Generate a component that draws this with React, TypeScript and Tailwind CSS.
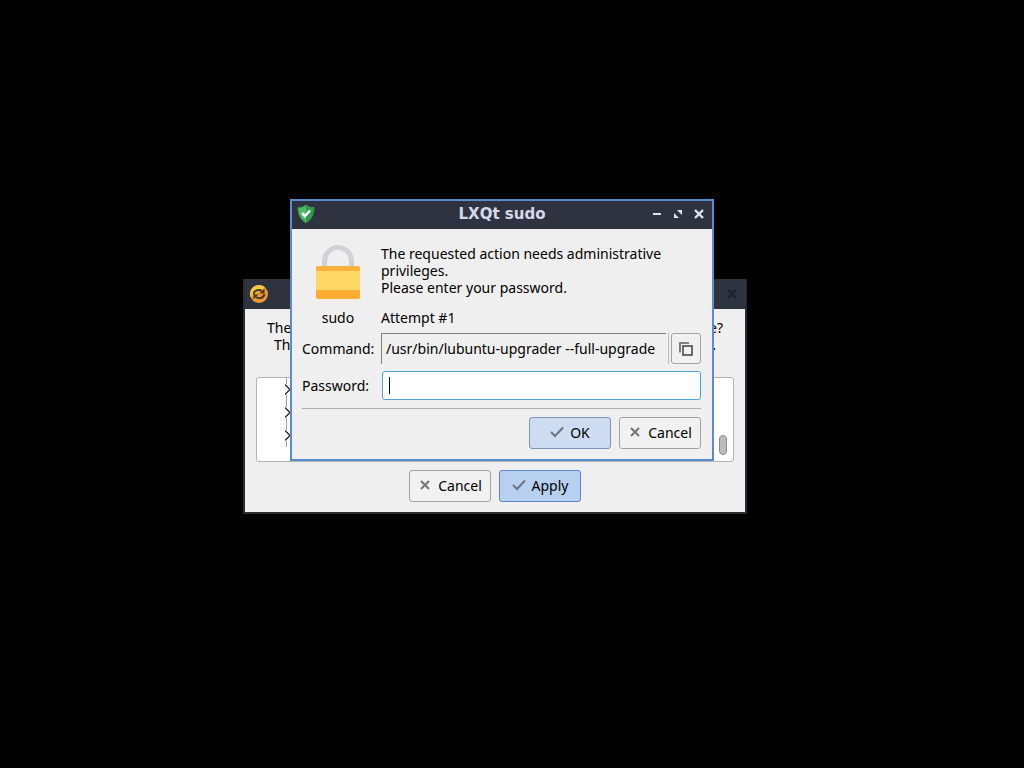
import { useState } from 'react'
import type { ReactNode } from 'react'

const CHEVRONS = ['linux', 'firmware', 'security']

function ShieldIcon() {
  return (
    <svg width="20" height="20" viewBox="0 0 20 20" aria-hidden="true">
      <path d="M10 1C7.500 3 5 3.600 2 3.600C2 10.500 4.500 15.500 10 19Z" fill="#4cbb66" />
      <path d="M10 1C12.500 3 15 3.600 18 3.600C18 10.500 15.500 15.500 10 19Z" fill="#2f9a4e" />
      <path d="M10 1C7.500 3 5 3.600 2 3.600C2 10.500 4.500 15.500 10 19C15.500 15.500 18 10.500 18 3.600C15 3.600 12.500 3 10 1Z" fill="none" stroke="#3a8f50" />
      <path d="M6 9L9 12L14 6.500" fill="none" stroke="#fff" strokeWidth="2.600" />
    </svg>
  )
}

function UpdateIcon() {
  return (
    <svg width="20" height="20" viewBox="0 0 20 20" aria-hidden="true">
      <circle cx="10" cy="10" r="9" fill="#ee9a35" />
      <path d="M1.500 13A9 9 0 0 1 16 3.300Z" fill="#f4c844" />
      <path d="M4.500 10.500C5 6.500 9.500 4.800 13 7" fill="none" stroke="#4a3a26" strokeWidth="2" />
      <path d="M15.500 4.500V9.500H10.500Z" fill="#4a3a26" />
      <path d="M15.500 10C15 13.800 10.500 15.300 7 13.200" fill="none" stroke="#4a3a26" strokeWidth="2" />
      <path d="M4.500 15.500V10.500H9.500Z" fill="#4a3a26" />
    </svg>
  )
}

function LockIcon() {
  return (
    <svg width="44" height="56" viewBox="0 0 44 56" aria-hidden="true">
      <path d="M8.500 23V16A13.500 13.500 0 0 1 35.500 16V23" fill="none" stroke="#d2d2d4" strokeWidth="5" />
      <rect y="21" width="44" height="33" rx="2" fill="#ffd764" />
      <path d="M0 26V23A2 2 0 0 1 2 21H42A2 2 0 0 1 44 23V26Z" fill="#ffb13b" />
      <path d="M0 45H44V52A2 2 0 0 1 42 54H2A2 2 0 0 1 0 52Z" fill="#ffac33" />
    </svg>
  )
}

function CheckIcon() {
  return (
    <svg width="14" height="14" viewBox="0 0 14 14" aria-hidden="true">
      <path d="M1 7L5 11L13 2.500" fill="none" stroke="#6b7480" strokeWidth="2" />
    </svg>
  )
}

function CrossIcon() {
  return (
    <svg width="14" height="14" viewBox="0 0 14 14" aria-hidden="true">
      <path d="M3 3L11 11M11 3L3 11" fill="none" stroke="#747474" strokeWidth="2" />
    </svg>
  )
}

function CopyIcon() {
  return (
    <svg width="16" height="16" viewBox="0 0 16 16" aria-hidden="true">
      <path d="M2 11.500V2H11" fill="none" stroke="#5c5c5c" strokeWidth="1.600" />
      <rect x="5" y="5" width="9" height="9" fill="none" stroke="#5c5c5c" strokeWidth="1.800" />
    </svg>
  )
}

interface ActionButtonProps {
  icon: ReactNode
  label: string
  className: string
}

function ActionButton({ icon, label, className }: ActionButtonProps) {
  return (
    <button type="button" className={`flex h-8 w-[82px] items-center justify-center gap-1.5 rounded-[3px] border pb-0.5 ${className}`}>
      {icon}
      {label}
    </button>
  )
}

function UpgraderWindow() {
  return (
    <section className="absolute left-[243px] top-[279px] w-[504px] border-x-2 border-b-2 border-[#2b2d33] bg-[#efefef]">
      <header className="flex h-[30px] items-center justify-between bg-[#2f323f] pl-1 pr-2">
        <UpdateIcon />
        <button type="button" aria-label="Close">
          <svg width="10" height="10" viewBox="0 0 10 10" aria-hidden="true">
            <path d="M1 1L9 9M9 1L1 9" stroke="#1f222c" strokeWidth="2" />
          </svg>
        </button>
      </header>
      <div className="px-[11px] pb-2.5 pt-2.5">
        <div className="h-[58px]">
          <p className="flex justify-between px-[11px]"><span>The</span><span>e?</span></p>
          <p className="flex justify-between px-[18px]"><span>Th</span><span>.</span></p>
        </div>
        <div className="flex h-[85px] justify-between rounded-[3px] border border-[#b4b4b4] bg-white">
          <ul className="ml-7">
            {CHEVRONS.map((c) => (
              <li key={c} className="flex h-[23px] flex-col items-start">
                <span className="ml-px h-[6px] border-l border-gray-400" />
                <svg width="6" height="11" viewBox="0 0 6 11" aria-hidden="true">
                  <path d="M0 0.500L5 5.500L0 10.500" fill="none" stroke="#26262c" strokeWidth="1.300" />
                </svg>
                <span className="ml-px h-[6px] border-l border-gray-400" />
              </li>
            ))}
          </ul>
          <div className="mb-1.5 mr-1.5 h-5 w-2 self-end rounded-full border border-[#8d8d8d] bg-[#bcbcbc]" />
        </div>
        <div className="mt-2 flex justify-center gap-2">
          <ActionButton icon={<CrossIcon />} label="Cancel" className="border-[#a3a3a3] bg-[#f1f1f1]" />
          <ActionButton icon={<CheckIcon />} label="Apply" className="border-[#5b87c7] bg-[#b7d0f0]" />
        </div>
      </div>
    </section>
  )
}

function SudoDialog() {
  const [password, setPassword] = useState('')

  return (
    <section className="absolute left-[290px] top-[199px] w-[424px] border-2 border-[#5b8ccb] bg-[#efefef]">
      <header className="grid h-7 grid-cols-[64px_1fr_64px] items-center bg-[#2f3340] px-1 pb-0.5">
        <ShieldIcon />
        <h1 className="text-center font-['DejaVu_Sans'] text-[15px] font-bold text-[#d3d9e9]">LXQt sudo</h1>
        <div className="flex items-center justify-end gap-[11px] pr-1">
          <button type="button" aria-label="Minimize">
            <svg width="10" height="10" viewBox="0 0 10 10" aria-hidden="true">
              <path d="M1 5H9" stroke="#dfe4ee" strokeWidth="2" />
            </svg>
          </button>
          <button type="button" aria-label="Maximize">
            <svg width="10" height="10" viewBox="0 0 10 10" aria-hidden="true">
              <path d="M4 1H9V6ZM1 4V9H6Z" fill="#dfe4ee" />
            </svg>
          </button>
          <button type="button" aria-label="Close">
            <svg width="10" height="10" viewBox="0 0 10 10" aria-hidden="true">
              <path d="M1 1L9 9M9 1L1 9" stroke="#dfe4ee" strokeWidth="2.400" />
            </svg>
          </button>
        </div>
      </header>

      <form className="pb-2.5 pl-2.5 pr-[11px] pt-4" onSubmit={(e) => e.preventDefault()}>
        <div className="grid grid-cols-[72px_1fr] gap-x-[7px]">
          <div className="flex justify-center"><LockIcon /></div>
          <p>
            The requested action needs administrative<br />
            privileges.<br />
            Please enter your password.
          </p>
          <p className="mt-2 text-center">sudo</p>
          <p className="mt-2">Attempt #1</p>
        </div>

        <div className="mt-[7px] grid grid-cols-[72px_1fr] items-center gap-x-[7px] gap-y-[7px]">
          <label htmlFor="command">Command:</label>
          <div className="flex gap-0.5">
            <div className="flex-1 border-r border-[#bbb] pr-0.5">
              <input id="command" readOnly value="/usr/bin/lubuntu-upgrader --full-upgrade"
                className="block h-[31px] w-full border-l border-t border-[#808080] bg-transparent pb-0.5 pl-1 outline-none" />
            </div>
            <button type="button" aria-label="Copy command"
              className="flex h-[31px] w-[30px] items-center justify-center rounded-[3px] border border-[#a3a3a3] bg-[#f1f1f1]">
              <CopyIcon />
            </button>
          </div>
          <label htmlFor="password">Password:</label>
          <div className="relative pl-px">
            <input id="password" type="password" value={password} onChange={(e) => setPassword(e.target.value)}
              className="block h-[29px] w-full rounded-[3px] border border-[#4fa3cc] bg-white px-1.5 caret-transparent outline-none" />
            {password === '' && <span className="absolute left-2 top-1.5 h-[17px] w-px bg-black" />}
          </div>
        </div>

        <hr className="mt-2 border-t border-[#b0b0b0]" />
        <div className="mt-2 flex justify-end gap-2">
          <ActionButton icon={<CheckIcon />} label="OK" className="border-[#7f94b8] bg-[#cddcf0]" />
          <ActionButton icon={<CrossIcon />} label="Cancel" className="border-[#a3a3a3] bg-[#f1f1f1]" />
        </div>
      </form>
    </section>
  )
}

export default function App() {
  return (
    <main className="relative min-h-screen overflow-hidden bg-black font-['Noto_Sans',sans-serif] text-[14px] leading-[17px] text-black">
      <UpgraderWindow />
      <SudoDialog />
    </main>
  )
}
